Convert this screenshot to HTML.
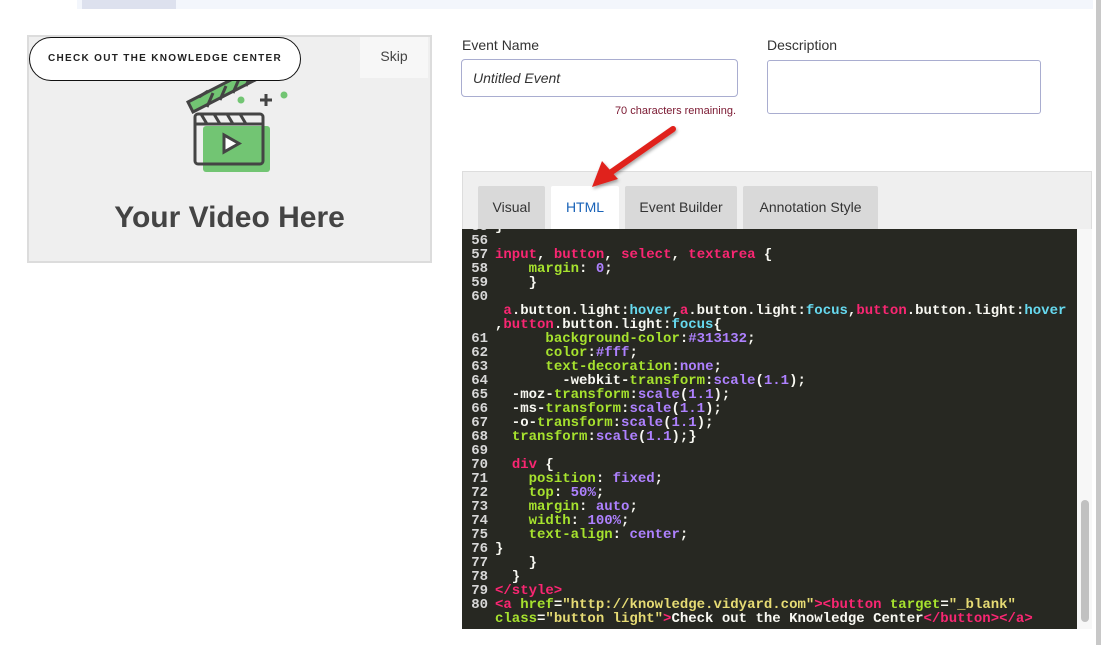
<!DOCTYPE html>
<html><head><meta charset="utf-8"><style>
*{margin:0;padding:0;box-sizing:border-box}
body{width:1101px;height:645px;background:#fff;position:relative;overflow:hidden;font-family:"Liberation Sans",sans-serif}
.abs{position:absolute}
.code{left:462px;top:229px;width:615px;height:400px;background:#272822;overflow:hidden}
.code pre{position:absolute;left:0;top:-9px;font:bold 14px/14px "Liberation Mono",monospace;color:#f8f8f2;white-space:pre}
.n{color:#d8d8d8;display:inline-block;width:33px;text-align:right;padding-right:7px}
.p{color:#f92672}.g{color:#a6e22e}.v{color:#ae81ff}.c{color:#66d9ef}.y{color:#e6db74}
.tab{top:186px;height:43px;background:#d9d9d9;font-size:14px;color:#333;text-align:center;line-height:43px;border-radius:2px 2px 0 0}
</style></head><body>
<div class="abs" style="left:77px;top:0;width:1016px;height:9px;background:#f3f6fc"></div>
<div class="abs" style="left:82px;top:0;width:94px;height:9px;background:#dde1ee"></div>
<div class="abs" style="left:1096px;top:0;width:5px;height:645px;background:#c8c8c8"></div>

<div class="abs" style="left:27px;top:35px;width:405px;height:228px;background:#efefef;border:2px solid #dcdcdc"></div>
<svg class="abs" style="left:180px;top:60px" width="120" height="120" viewBox="180 60 120 120">
<rect x="203" y="126" width="67" height="46" rx="3" fill="#72c573"/>
<g fill="none" stroke="#444" stroke-width="3">
<rect x="195" y="114" width="68" height="50" rx="3"/>
<line x1="195" y1="124" x2="263" y2="124"/>
<path d="M201 114l6 10M214 114l6 10M227 114l6 10M240 114l6 10"/>
<path d="M188 102l70-36 5 10-70 36z" fill="#72c573"/>
<path d="M199 97l9-6M207 107l6-14M220 100l6-14M233 93l6-14M246 86l6-14"/>
<path d="M224 135v17l15-8.5z" fill="#fff"/>
<path d="M266 94v12M260 100h12"/>
</g>
<circle cx="241" cy="100" r="3.5" fill="#72c573"/><circle cx="284" cy="95" r="3.5" fill="#72c573"/>
</svg>
<div class="abs" style="left:29px;top:37px;width:272px;height:44px;background:#fff;border:1.5px solid #111;border-radius:22px;font-size:10px;font-weight:bold;letter-spacing:1.3px;color:#222;text-align:center;line-height:41px">CHECK OUT THE KNOWLEDGE CENTER</div>
<div class="abs" style="left:360px;top:37px;width:68px;height:41px;background:#f7f7f7;font-size:14px;color:#444;text-align:center;line-height:39px">Skip</div>
<div class="abs" style="left:29px;top:201px;width:401px;text-align:center;font-size:30px;font-weight:bold;color:#444">Your Video Here</div>

<div class="abs" style="left:462px;top:37px;font-size:14px;color:#333">Event Name</div>
<div class="abs" style="left:767px;top:37px;font-size:14px;color:#333">Description</div>
<div class="abs" style="left:461px;top:59px;width:277px;height:38px;border:1px solid #a9add0;border-radius:4px;font-size:14px;font-style:italic;color:#333;padding:10px 11px">Untitled Event</div>
<div class="abs" style="left:767px;top:60px;width:274px;height:54px;border:1px solid #a9add0;border-radius:3px"></div>
<div class="abs" style="left:560px;top:105px;width:176px;text-align:right;font-size:11px;color:#7a1730">70 characters remaining.</div>

<div class="abs" style="left:462px;top:171px;width:630px;height:60px;background:#efefef;border:1px solid #ddd"></div>
<div class="abs tab" style="left:478px;width:67px">Visual</div>
<div class="abs tab" style="left:551px;width:68px;background:#fff;color:#1a63b8">HTML</div>
<div class="abs tab" style="left:625px;width:112px">Event Builder</div>
<div class="abs tab" style="left:743px;width:135px">Annotation Style</div>

<div class="abs code"><pre><span class="n">55</span>}
<span class="n">56</span>
<span class="n">57</span><span class="p">input</span>, <span class="p">button</span>, <span class="p">select</span>, <span class="p">textarea</span> {
<span class="n">58</span>    <span class="g">margin</span>: <span class="v">0</span>;
<span class="n">59</span>    }
<span class="n">60</span>
<span class="n"></span> <span class="p">a</span>.button.light:<span class="c">hover</span>,<span class="p">a</span>.button.light:<span class="c">focus</span>,<span class="p">button</span>.button.light:<span class="c">hover</span>
<span class="n"></span>,<span class="p">button</span>.button.light:<span class="c">focus</span>{
<span class="n">61</span>      <span class="g">background-color</span>:<span class="v">#313132</span>;
<span class="n">62</span>      <span class="g">color</span>:<span class="v">#fff</span>;
<span class="n">63</span>      <span class="g">text-decoration</span>:<span class="v">none</span>;
<span class="n">64</span>        -webkit-<span class="g">transform</span>:<span class="v">scale</span>(<span class="v">1.1</span>);
<span class="n">65</span>  -moz-<span class="g">transform</span>:<span class="v">scale</span>(<span class="v">1.1</span>);
<span class="n">66</span>  -ms-<span class="g">transform</span>:<span class="v">scale</span>(<span class="v">1.1</span>);
<span class="n">67</span>  -o-<span class="g">transform</span>:<span class="v">scale</span>(<span class="v">1.1</span>);
<span class="n">68</span>  <span class="g">transform</span>:<span class="v">scale</span>(<span class="v">1.1</span>);}
<span class="n">69</span>
<span class="n">70</span>  <span class="p">div</span> {
<span class="n">71</span>    <span class="g">position</span>: <span class="v">fixed</span>;
<span class="n">72</span>    <span class="g">top</span>: <span class="v">50%</span>;
<span class="n">73</span>    <span class="g">margin</span>: <span class="v">auto</span>;
<span class="n">74</span>    <span class="g">width</span>: <span class="v">100%</span>;
<span class="n">75</span>    <span class="g">text-align</span>: <span class="v">center</span>;
<span class="n">76</span>}
<span class="n">77</span>    }
<span class="n">78</span>  }
<span class="n">79</span><span class="p">&lt;/style&gt;</span>
<span class="n">80</span><span class="p">&lt;a</span> <span class="g">href</span>=<span class="y">"http://knowledge.vidyard.com"</span><span class="p">&gt;&lt;button</span> <span class="g">target</span>=<span class="y">"_blank"</span>
<span class="n"></span><span class="g">class</span>=<span class="y">"button light"</span><span class="p">&gt;</span>Check out the Knowledge Center<span class="p">&lt;/button&gt;&lt;/a&gt;</span></pre></div>
<div class="abs" style="left:1077px;top:229px;width:15px;height:400px;background:#f7f7f7"></div>
<div class="abs" style="left:1081px;top:500px;width:8px;height:122px;background:#c1c1c1;border-radius:4px"></div>

<svg class="abs" style="left:580px;top:115px" width="110" height="85">
<defs><filter id="s"><feDropShadow dx="1" dy="2" stdDeviation="1.5" flood-opacity="0.35"/></filter></defs>
<g filter="url(#s)"><line x1="93" y1="14" x2="30" y2="58" stroke="#e0231f" stroke-width="6" stroke-linecap="round"/>
<path d="M12 72L22 46L38 64Z" fill="#e0231f"/></g>
</svg>
</body></html>
